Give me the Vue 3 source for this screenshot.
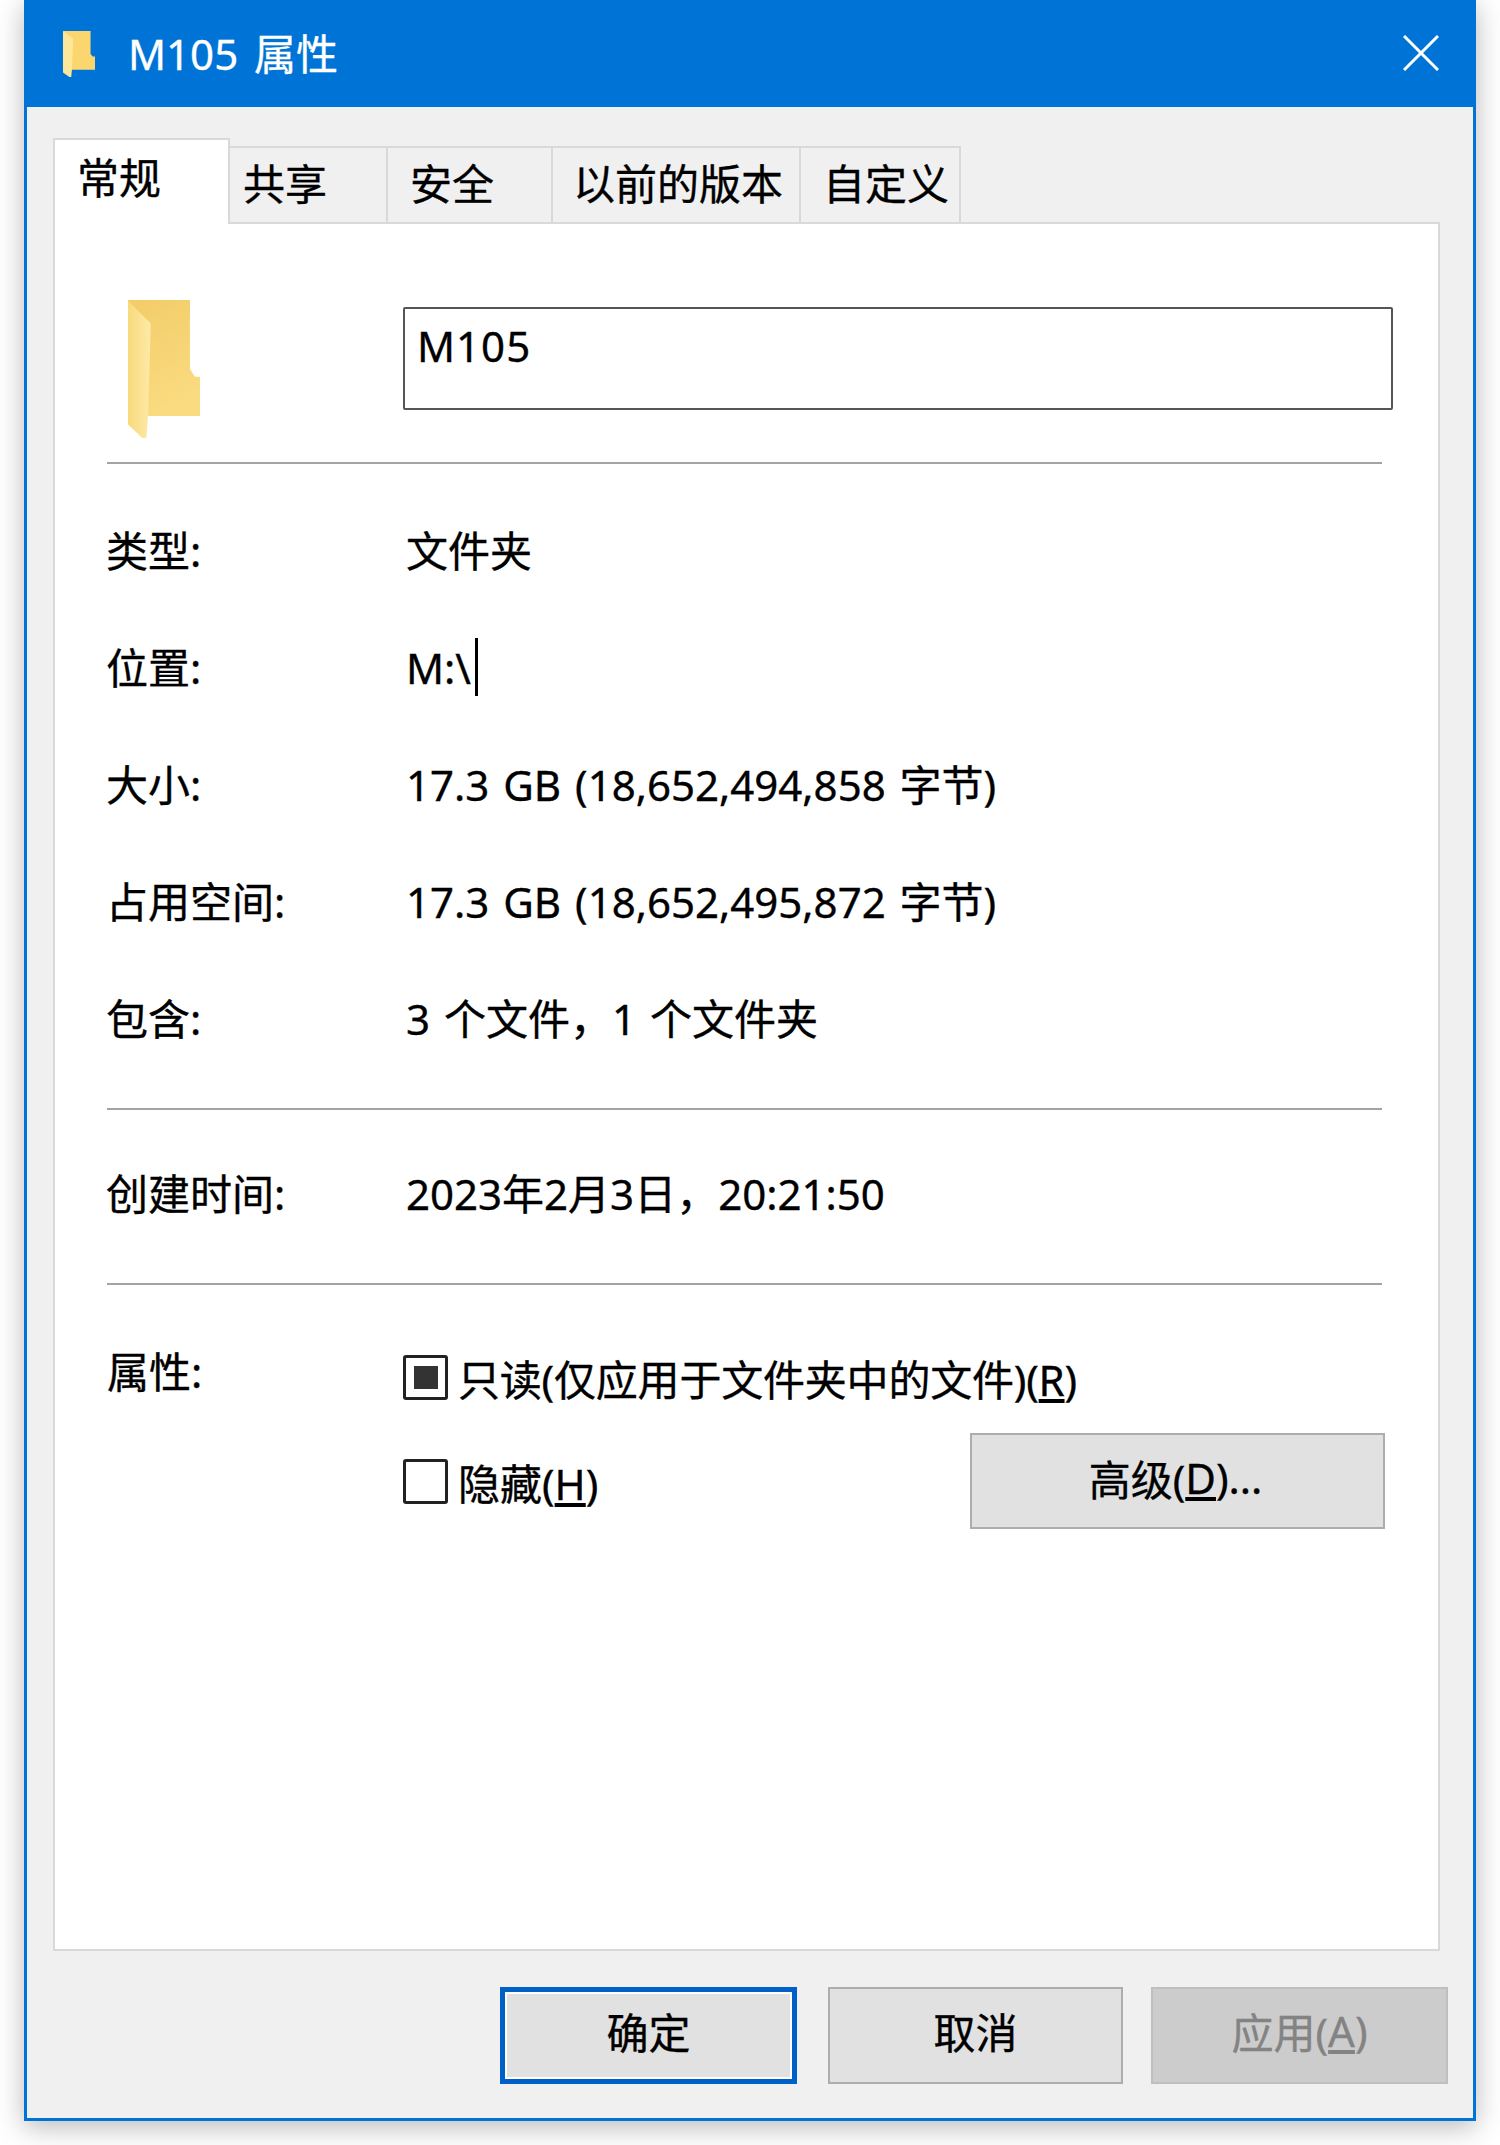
<template>
  <div class="page">
    <div class="window">
      <div class="titlebar">
        <svg class="title-icon" viewBox="145 120 215 410" preserveAspectRatio="none">
          <path :d="folderBack" fill="#fbd66e" />
          <path :d="folderFlap" fill="#fde79b" />
        </svg>
        <span class="title-text">M105 属性</span>
        <svg class="close-icon" viewBox="0 0 36 36">
          <path d="M1 1 L35 35 M35 1 L1 35" stroke="#fff" stroke-width="3" fill="none" />
        </svg>
      </div>

      <div class="body">
        <div class="tabs">
          <div
            v-for="(tab, i) in tabs"
            :key="tab.label"
            class="tab"
            :class="{ active: i === 0 }"
            :style="{ width: tab.width + 'px', paddingLeft: tab.pad + 'px' }"
          >{{ tab.label }}</div>
        </div>

        <div class="panel">
          <div class="head">
            <svg class="folder" viewBox="145 120 215 410" preserveAspectRatio="none">
              <defs>
                <linearGradient id="backFill" x1="0" y1="0" x2="0.3" y2="1">
                  <stop offset="0" stop-color="#f2cc68" />
                  <stop offset="1" stop-color="#fadb80" />
                </linearGradient>
                <linearGradient id="flapFill" x1="0" y1="0" x2="1" y2="0">
                  <stop offset="0" stop-color="#f8da7c" />
                  <stop offset="1" stop-color="#feeaa8" />
                </linearGradient>
              </defs>
              <path :d="folderBack" fill="url(#backFill)" />
              <path :d="folderFlap" fill="url(#flapFill)" />
            </svg>
            <div class="name-input">M105</div>
          </div>
          <div class="rule first"></div>

          <div v-for="row in infoRows" :key="row.label" class="row">
            <div class="label">{{ row.label }}</div>
            <div class="value">{{ row.value }}<span v-if="row.caret" class="caret"></span></div>
          </div>
          <div class="rule"></div>

          <div class="row">
            <div class="label">创建时间:</div>
            <div class="value">2023年2月3日，20:21:50</div>
          </div>
          <div class="rule"></div>

          <div class="attrs">
            <div class="attrs-label">属性:</div>
            <div class="attrs-right">
              <div class="check-row">
                <span class="checkbox"><span class="mark"></span></span>
                <span class="check-text">只读(仅应用于文件夹中的文件)(<u>R</u>)</span>
              </div>
              <div class="check-row second">
                <div class="check-group">
                  <span class="checkbox"></span>
                  <span>隐藏(<u>H</u>)</span>
                </div>
                <div class="btn advanced">高级(<u>D</u>)...</div>
              </div>
            </div>
          </div>
        </div>

        <div class="footer">
          <div class="btn primary">确定</div>
          <div class="btn cancel">取消</div>
          <div class="btn disabled">应用(<u>A</u>)</div>
        </div>
      </div>
    </div>
  </div>
</template>

<script setup>
const folderBack = 'M145 120 L330 120 L330 325 L345 348 L360 348 L360 465 L200 465 Z'
const folderFlap = 'M145 122 L213 190 L205 465 L200 530 L188 530 L145 490 Z'

const tabs = [
  { label: '常规', width: 177, pad: 22 },
  { label: '共享', width: 158, pad: 13 },
  { label: '安全', width: 165, pad: 22 },
  { label: '以前的版本', width: 248, pad: 20 },
  { label: '自定义', width: 160, pad: 22 }
]

const infoRows = [
  { label: '类型:', value: '文件夹' },
  { label: '位置:', value: 'M:\\', caret: true },
  { label: '大小:', value: '17.3 GB (18,652,494,858 字节)' },
  { label: '占用空间:', value: '17.3 GB (18,652,495,872 字节)' },
  { label: '包含:', value: '3 个文件，1 个文件夹' }
]
</script>

<style>
html, body {
  margin: 0;
  background: #fff;
}
</style>

<style scoped>
.page {
  width: 1500px;
  height: 2145px;
  box-sizing: border-box;
  padding-left: 24px;
  overflow: hidden;
  background: #fff;
  font-family: "Noto Sans", "Noto Sans CJK SC", sans-serif;
  font-size: 42px;
  color: #000;
  -webkit-text-stroke: 0.35px currentColor;
}
.window {
  width: 1452px;
  height: 2121px;
  box-sizing: border-box;
  display: flex;
  flex-direction: column;
  border: 3px solid #0074d6;
  border-top: none;
  background: #f0f0f0;
  box-shadow: 0 6px 26px rgba(0, 0, 0, 0.28);
}
.titlebar {
  height: 107px;
  flex: none;
  display: flex;
  align-items: center;
  padding: 0 34px 0 36px;
  background: #0074d6;
  color: #fff;
}
.title-icon {
  width: 32px;
  height: 46px;
  margin-right: 33px;
  margin-top: 1px;
}
.title-text {
  flex: 1;
  line-height: 107px;
  word-spacing: 5px;
}
.close-icon {
  width: 36px;
  height: 36px;
  margin-top: -2px;
}
.body {
  flex: 1;
  display: flex;
  flex-direction: column;
  padding: 31px 33px 34px 26px;
  min-height: 0;
}
.tabs {
  display: flex;
  align-items: flex-end;
  height: 84px;
  position: relative;
  z-index: 1;
}
.tab {
  height: 76px;
  box-sizing: border-box;
  border: 2px solid #d9d9d9;
  border-bottom: none;
  border-left: none;
  line-height: 72px;
  white-space: nowrap;
}
.tab.active {
  height: 86px;
  margin-bottom: -2px;
  background: #fff;
  border-left: 2px solid #d9d9d9;
  line-height: 76px;
}
.panel {
  flex: 1;
  box-sizing: border-box;
  background: #fff;
  border: 2px solid #d9d9d9;
  padding: 76px 0 0 52px;
}
.head {
  display: flex;
  height: 138px;
}
.folder {
  width: 72px;
  height: 138px;
  margin-left: 21px;
}
.name-input {
  width: 990px;
  height: 103px;
  box-sizing: border-box;
  margin: 7px 0 0 203px;
  padding-left: 12px;
  border: 2px solid #555;
  border-radius: 2px;
  line-height: 74px;
  letter-spacing: 1px;
}
.rule {
  width: 1275px;
  height: 2px;
  margin: 31px 0 25px;
  background: #a3a3a3;
}
.rule.first {
  margin: 24px 0 28px;
}
.row {
  display: flex;
  height: 117px;
  line-height: 117px;
}
.label {
  width: 299px;
  flex: none;
  text-indent: -1px;
}
.value {
  white-space: nowrap;
  word-spacing: 3px;
}
.caret {
  display: inline-block;
  position: relative;
  top: -6px;
  width: 3px;
  height: 58px;
  margin-left: 4px;
  background: #000;
  vertical-align: middle;
}
.attrs {
  display: flex;
  padding-top: 33px;
}
.attrs-label {
  width: 296px;
  flex: none;
  line-height: 58px;
}
.attrs-right {
  width: 982px;
  padding-top: 12px;
}
.check-row {
  display: flex;
  align-items: center;
  height: 45px;
  white-space: nowrap;
}
.check-row.second {
  justify-content: space-between;
  margin-top: 59px;
}
.check-group {
  display: flex;
  align-items: center;
}
.check-text {
  letter-spacing: -0.2px;
}
.checkbox {
  width: 45px;
  height: 45px;
  flex: none;
  box-sizing: border-box;
  margin-right: 10px;
  display: flex;
  align-items: center;
  justify-content: center;
  border: 3px solid #222;
  border-radius: 3px;
  background: #fff;
}
.mark {
  width: 24px;
  height: 23px;
  background: #333;
}
.btn {
  width: 297px;
  height: 97px;
  box-sizing: border-box;
  display: flex;
  align-items: center;
  justify-content: center;
  padding-bottom: 10px;
  border: 2px solid #adadad;
  background: #e1e1e1;
  white-space: nowrap;
}
.btn.advanced {
  width: 415px;
  height: 96px;
  padding: 0 4px 7px 0;
  margin-top: -1px;
}
.footer {
  display: flex;
  justify-content: flex-end;
  margin-top: 36px;
  margin-right: -8px;
}
.btn.primary {
  border: 5px solid #0060c8;
  box-shadow: inset 0 0 0 2px #fff;
}
.btn.cancel {
  width: 295px;
  margin: 0 28px 0 31px;
}
.btn.disabled {
  background: #ccc;
  border-color: #bfbfbf;
  color: #838383;
}
</style>
